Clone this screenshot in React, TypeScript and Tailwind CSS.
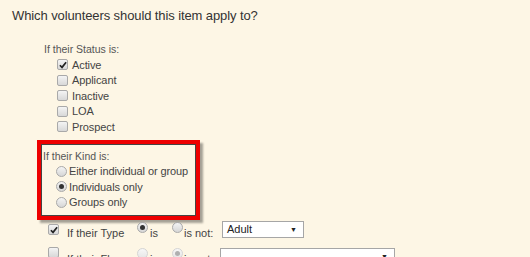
const statuses = [
  { label: "Active", checked: true },
  { label: "Applicant", checked: false },
  { label: "Inactive", checked: false },
  { label: "LOA", checked: false },
  { label: "Prospect", checked: false },
];

const kinds = [
  { label: "Either individual or group", checked: false },
  { label: "Individuals only", checked: true },
  { label: "Groups only", checked: false },
];

function Check({ checked }: { checked: boolean }) {
  return (
    <span className="flex h-[11px] w-[11px] shrink-0 items-center justify-center rounded-[2px] border border-[#a9a9a9] bg-gradient-to-b from-[#f4f4f4] to-[#d8d8d8]">
      {checked && (
        <svg width="8" height="8" viewBox="0 0 9 9">
          <path d="M1 4.8 L3.4 7.2 L8 1.5" fill="none" stroke="#222" strokeWidth="1.9" />
        </svg>
      )}
    </span>
  );
}

function Radio({ checked, dim }: { checked: boolean; dim?: boolean }) {
  return (
    <span
      className={`flex h-[11px] w-[11px] shrink-0 items-center justify-center rounded-full border bg-gradient-to-b ${
        dim ? "border-[#d4d4d4] from-[#f7f7f7] to-[#e6e6e6]" : "border-[#a9a9a9] from-[#f4f4f4] to-[#d6d6d6]"
      }`}
    >
      {checked && <span className={`h-[5px] w-[5px] rounded-full ${dim ? "bg-[#b0b0b0]" : "bg-[#333]"}`} />}
    </span>
  );
}

function Select({ value, width }: { value: string; width: string }) {
  return (
    <div
      className={`flex h-[17px] ${width} items-center justify-between border border-[#a6a6a6] bg-white pl-[4px] pr-[6px] text-[11px] text-[#222]`}
    >
      <span>{value}</span>
      <span className="text-[7px]">▼</span>
    </div>
  );
}

export default function App() {
  return (
    <div
      className="h-[257px] w-[530px] overflow-hidden bg-[#fdf6e5] text-[#444]"
      style={{ fontFamily: '"Liberation Sans", Arial, sans-serif' }}
    >
      <h1 className="pl-[12px] pt-[8px] text-[13px] leading-[16px] tracking-[-0.1px] text-[#333]">
        Which volunteers should this item apply to?
      </h1>

      <div className="mt-[18px] pl-[44px]">
        <p className="text-[10.5px] leading-[15px] text-[#555]">If their Status is:</p>
        <ul className="pl-[13px]">
          {statuses.map((s) => (
            <li key={s.label} className="flex h-[15.5px] items-center gap-[4px] whitespace-nowrap text-[11px] tracking-[-0.1px]">
              <Check checked={s.checked} />
              <span>{s.label}</span>
            </li>
          ))}
        </ul>
      </div>

      <div className="ml-[37px] mt-[5px] h-[80px] w-[163px] border-4 border-[#ee0000] pl-[2px] pt-[4px] shadow-[inset_0_0_0_1px_#444,3px_3px_2px_rgba(0,0,0,0.35)]">
        <p className="text-[10.5px] leading-[16px] text-[#555]">If their Kind is:</p>
        <ul className="pl-[13px]">
          {kinds.map((k) => (
            <li key={k.label} className="flex h-[15.5px] items-center gap-[2px] whitespace-nowrap text-[11px] tracking-[-0.1px]">
              <Radio checked={k.checked} />
              <span>{k.label}</span>
            </li>
          ))}
        </ul>
      </div>

      <div className="ml-[48px] mt-[1.5px] flex items-start whitespace-nowrap text-[11px] leading-[13px]">
        <span className="mt-[3px]">
          <Check checked />
        </span>
        <span className="ml-[8px] mt-[5.5px] w-[70px]">If their Type</span>
        <span className="mt-[1px]">
          <Radio checked />
        </span>
        <span className="ml-[2px] mt-[5.5px] w-[22px]">is</span>
        <span className="mt-[1px]">
          <Radio checked={false} />
        </span>
        <span className="ml-[1px] mt-[5.5px] w-[38px]">is not:</span>
        <Select value="Adult" width="w-[82px]" />
      </div>

      <div className="ml-[48px] mt-[7px] flex items-start whitespace-nowrap text-[11px] leading-[13px]">
        <Check checked={false} />
        <span className="ml-[8px] mt-[6px] w-[70px]">If their Flag</span>
        <span className="mt-[1px]">
          <Radio checked={false} dim />
        </span>
        <span className="ml-[2px] mt-[6px] w-[22px]">is</span>
        <span className="mt-[1px]">
          <Radio checked dim />
        </span>
        <span className="ml-[1px] mt-[6px] w-[36px]">is not:</span>
        <span className="mt-[1px]">
          <Select value="" width="w-[175px]" />
        </span>
      </div>
    </div>
  );
}
